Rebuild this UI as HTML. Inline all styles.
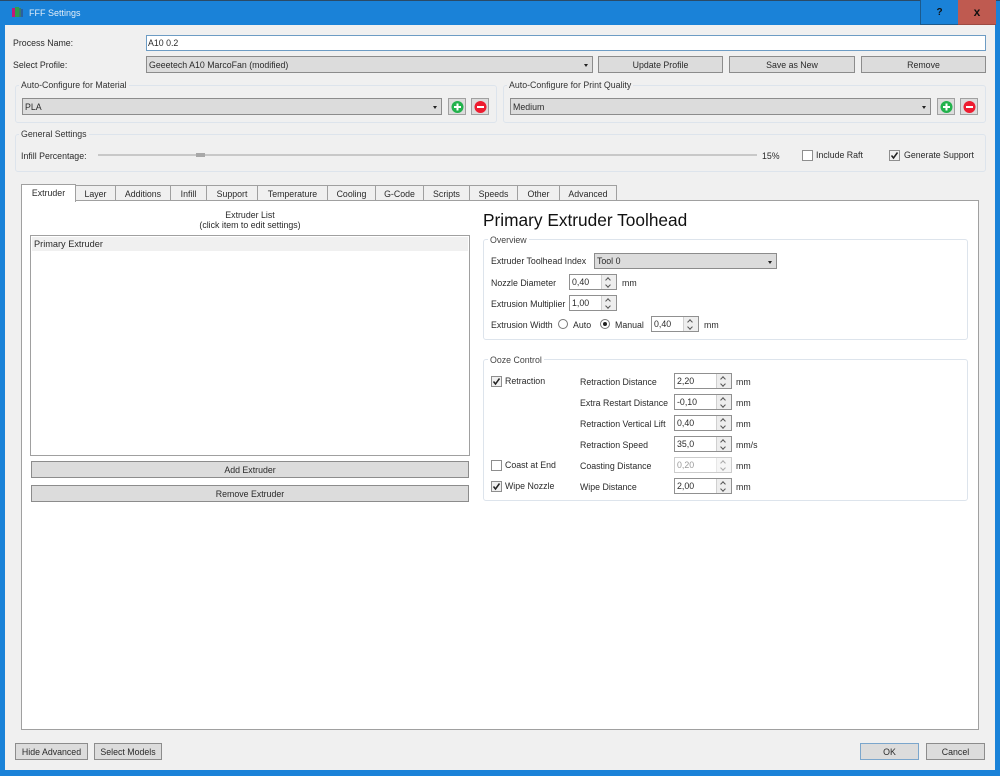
<!DOCTYPE html>
<html><head><meta charset="utf-8"><title>FFF Settings</title>
<style>
html,body{margin:0;padding:0;width:1000px;height:776px;overflow:hidden;background:#1a82d8}
body{position:relative;font-family:"Liberation Sans",sans-serif;font-size:8.800px;color:#2a2a2a;filter:blur(.35px)}
div,span{position:absolute;box-sizing:border-box}
.t{white-space:nowrap;height:14px;line-height:15px}
.b{background:#dcdcdc;border:1px solid #8c8c8c;text-align:center;line-height:16px;white-space:nowrap;color:#2a2a2a}
.c{background:#dcdcdc;border:1px solid #8c8c8c;line-height:16px;padding-left:2px;white-space:nowrap}
.c i{position:absolute;right:4px;top:7px;width:0;height:0;border:2px solid transparent;border-top:3px solid #222;border-bottom:0}
.g{border:1px solid #dde4ec;border-radius:3px}
.gt{background:#f0f0f0;padding:0 2px;height:12px;line-height:12px;white-space:nowrap;color:#333}
.gw{background:#fff;padding:0 2px;height:12px;line-height:12px;white-space:nowrap;color:#444}
.tab{top:185px;height:16px;background:#f0f0f0;border:1px solid #a0a0a0;border-left:0;text-align:center;line-height:16px;white-space:nowrap}
.ib{background:#dcdcdc;border:1px solid #a0a0a0;width:18px;height:17px;top:98px}
.ib svg{position:absolute;left:1px;top:1px}
.s{background:#fff;border:1px solid #909090;height:16px;line-height:15px;padding-left:2px;white-space:nowrap}
.s b{position:absolute;right:0;top:0;bottom:0;width:14px;background:#eeeeee;border-left:1px solid #d0d0d0;font-weight:normal}
.s b:before,.s b:after{content:"";position:absolute;left:4px;width:3px;height:3px;border-left:1px solid #555;border-top:1px solid #555}
.s b:before{top:3px;transform:rotate(45deg)}
.s b:after{top:8px;transform:rotate(225deg)}
.s u{position:absolute;right:0;top:6px;width:13px;height:1px;background:#fff}
.ck{width:11px;height:11px;background:#fff;border:1px solid #8e8e8e}
.ck svg{position:absolute;left:0;top:0}
.r{width:10px;height:10px;border-radius:50%;background:#fff;border:1px solid #777}
</style></head>
<body>
<div style="left:0;top:0;width:1000px;height:1px;background:#2b4a66"></div>
<div style="left:5px;top:25px;width:990px;height:745px;background:#f0f0f0"></div>

<svg style="position:absolute;left:12px;top:7px" width="12" height="11"><rect x="0" y="1" width="3" height="9" fill="#c2187a"/><rect x="3" y="0" width="4" height="10" fill="#2e9e4c"/><rect x="7" y="1" width="2" height="9" fill="#3a7a70"/><rect x="9" y="2" width="2" height="8" fill="#2a5fa0"/></svg>
<div class="t" style="left:29px;top:6px;color:#e3eef8;font-size:9px">FFF Settings</div>
<div style="left:920px;top:0;width:39px;height:25px;background:#1a82d8;border:1px solid #1c5a8c;border-top:0;text-align:center;line-height:26px;font-weight:bold;font-size:10px;color:#111">?</div>
<div style="left:958px;top:0;width:38px;height:25px;background:#bf5a50;border-bottom:1px solid #9c4a42;text-align:center;line-height:25px;font-weight:bold;font-size:12px;color:#111">x</div>

<div class="t" style="left:13px;top:36px">Process Name:</div>
<div style="left:146px;top:35px;width:840px;height:16px;background:#fff;border:1px solid #6d9cc4;line-height:15px;padding-left:1px;white-space:nowrap">A10 0.2</div>
<div class="t" style="left:13px;top:58px">Select Profile:</div>
<div class="c" style="left:146px;top:56px;width:447px;height:17px">Geeetech A10 MarcoFan (modified)<i></i></div>
<div class="b" style="left:598px;top:56px;width:125px;height:17px">Update Profile</div>
<div class="b" style="left:729px;top:56px;width:126px;height:17px">Save as New</div>
<div class="b" style="left:861px;top:56px;width:125px;height:17px">Remove</div>

<div class="g" style="left:15px;top:85px;width:482px;height:38px"></div>
<div class="gt" style="left:19px;top:79px">Auto-Configure for Material</div>
<div class="c" style="left:22px;top:98px;width:420px;height:17px">PLA<i></i></div>
<div class="ib" style="left:448px"><svg width="16" height="15"><circle cx="7.500" cy="7" r="6" fill="#22b24c"/><rect x="4" y="6" width="7" height="2" fill="#fff"/><rect x="6.500" y="3.500" width="2" height="7" fill="#fff"/></svg></div>
<div class="ib" style="left:471px"><svg width="16" height="15"><circle cx="7.500" cy="7" r="6" fill="#ee1c30"/><rect x="4" y="6" width="7" height="2" fill="#fff"/></svg></div>

<div class="g" style="left:503px;top:85px;width:483px;height:38px"></div>
<div class="gt" style="left:507px;top:79px">Auto-Configure for Print Quality</div>
<div class="c" style="left:510px;top:98px;width:421px;height:17px">Medium<i></i></div>
<div class="ib" style="left:937px"><svg width="16" height="15"><circle cx="7.500" cy="7" r="6" fill="#22b24c"/><rect x="4" y="6" width="7" height="2" fill="#fff"/><rect x="6.500" y="3.500" width="2" height="7" fill="#fff"/></svg></div>
<div class="ib" style="left:960px"><svg width="16" height="15"><circle cx="7.500" cy="7" r="6" fill="#ee1c30"/><rect x="4" y="6" width="7" height="2" fill="#fff"/></svg></div>

<div class="g" style="left:15px;top:134px;width:971px;height:38px"></div>
<div class="gt" style="left:19px;top:128px">General Settings</div>
<div class="t" style="left:21px;top:149px">Infill Percentage:</div>
<div style="left:98px;top:154px;width:659px;height:2px;background:#c8c8c8"></div>
<div style="left:196px;top:153px;width:9px;height:4px;background:#a8a8a8"></div>
<div class="t" style="left:762px;top:149px">15%</div>
<div class="ck" style="left:802px;top:150px"></div>
<div class="t" style="left:816px;top:148px">Include Raft</div>
<div class="ck" style="left:889px;top:150px;background:#f0f0f0"><svg width="9" height="9"><path d="M1.500 4.500L3.500 7L7.500 1.500" fill="none" stroke="#222" stroke-width="1.500"/></svg></div>
<div class="t" style="left:904px;top:148px">Generate Support</div>

<div class="tab" style="left:76px;width:40px">Layer</div>
<div class="tab" style="left:116px;width:55px">Additions</div>
<div class="tab" style="left:171px;width:36px">Infill</div>
<div class="tab" style="left:207px;width:51px">Support</div>
<div class="tab" style="left:258px;width:70px">Temperature</div>
<div class="tab" style="left:328px;width:48px">Cooling</div>
<div class="tab" style="left:376px;width:48px">G-Code</div>
<div class="tab" style="left:424px;width:46px">Scripts</div>
<div class="tab" style="left:470px;width:48px">Speeds</div>
<div class="tab" style="left:518px;width:42px">Other</div>
<div class="tab" style="left:560px;width:57px">Advanced</div>
<div style="left:21px;top:200px;width:958px;height:530px;background:#fff;border:1px solid #a0a0a0"></div>
<div style="left:21px;top:184px;width:55px;height:18px;background:#fff;border:1px solid #a0a0a0;border-bottom:0;text-align:center;line-height:16px">Extruder</div>

<div class="t" style="left:30px;width:440px;top:208px;text-align:center">Extruder List</div>
<div class="t" style="left:30px;width:440px;top:218px;text-align:center">(click item to edit settings)</div>
<div style="left:30px;top:235px;width:440px;height:221px;background:#fff;border:1px solid #a0a0a0"></div>
<div style="left:32px;top:237px;width:436px;height:14px;background:#f0f0f0;line-height:15px;padding-left:2px;font-size:9.200px">Primary Extruder</div>
<div class="b" style="left:31px;top:461px;width:438px;height:17px">Add Extruder</div>
<div class="b" style="left:31px;top:485px;width:438px;height:17px">Remove Extruder</div>

<div class="t" style="left:483px;top:210px;height:21px;line-height:21px;font-size:17.300px;color:#111">Primary Extruder Toolhead</div>

<div class="g" style="left:483px;top:239px;width:485px;height:101px"></div>
<div class="gw" style="left:488px;top:234px">Overview</div>
<div class="t" style="left:491px;top:254px">Extruder Toolhead Index</div>
<div class="c" style="left:594px;top:253px;width:183px;height:16px;line-height:15px">Tool 0<i></i></div>
<div class="t" style="left:491px;top:276px">Nozzle Diameter</div>
<div class="s" style="left:569px;top:274px;width:48px">0,40<b></b></div>
<div class="t" style="left:622px;top:276px">mm</div>
<div class="t" style="left:491px;top:297px">Extrusion Multiplier</div>
<div class="s" style="left:569px;top:295px;width:48px">1,00<b></b></div>
<div class="t" style="left:491px;top:318px">Extrusion Width</div>
<div class="r" style="left:558px;top:319px"></div>
<div class="t" style="left:573px;top:318px">Auto</div>
<div class="r" style="left:600px;top:319px"><span style="left:2px;top:2px;width:4px;height:4px;border-radius:50%;background:#222"></span></div>
<div class="t" style="left:615px;top:318px">Manual</div>
<div class="s" style="left:651px;top:316px;width:48px">0,40<b></b></div>
<div class="t" style="left:704px;top:318px">mm</div>

<div class="g" style="left:483px;top:359px;width:485px;height:142px"></div>
<div class="gw" style="left:488px;top:354px">Ooze Control</div>
<div class="ck" style="left:491px;top:376px;background:#f0f0f0"><svg width="9" height="9"><path d="M1.500 4.500L3.500 7L7.500 1.500" fill="none" stroke="#222" stroke-width="1.500"/></svg></div>
<div class="t" style="left:505px;top:374px">Retraction</div>
<div class="ck" style="left:491px;top:460px"></div>
<div class="t" style="left:505px;top:458px">Coast at End</div>
<div class="ck" style="left:491px;top:481px;background:#f0f0f0"><svg width="9" height="9"><path d="M1.500 4.500L3.500 7L7.500 1.500" fill="none" stroke="#222" stroke-width="1.500"/></svg></div>
<div class="t" style="left:505px;top:479px">Wipe Nozzle</div>

<div class="t" style="left:580px;top:375px">Retraction Distance</div>
<div class="s" style="left:674px;top:373px;width:58px">2,20<b></b></div>
<div class="t" style="left:736px;top:375px">mm</div>
<div class="t" style="left:580px;top:396px">Extra Restart Distance</div>
<div class="s" style="left:674px;top:394px;width:58px">-0,10<b></b></div>
<div class="t" style="left:736px;top:396px">mm</div>
<div class="t" style="left:580px;top:417px">Retraction Vertical Lift</div>
<div class="s" style="left:674px;top:415px;width:58px">0,40<b></b></div>
<div class="t" style="left:736px;top:417px">mm</div>
<div class="t" style="left:580px;top:438px">Retraction Speed</div>
<div class="s" style="left:674px;top:436px;width:58px">35,0<b></b></div>
<div class="t" style="left:736px;top:438px">mm/s</div>
<div class="t" style="left:580px;top:459px">Coasting Distance</div>
<div class="s" style="left:674px;top:457px;width:58px;border-color:#ccc;color:#999">0,20<b style="opacity:.5"></b></div>
<div class="t" style="left:736px;top:459px">mm</div>
<div class="t" style="left:580px;top:480px">Wipe Distance</div>
<div class="s" style="left:674px;top:478px;width:58px">2,00<b></b></div>
<div class="t" style="left:736px;top:480px">mm</div>

<div class="b" style="left:15px;top:743px;width:73px;height:17px">Hide Advanced</div>
<div class="b" style="left:94px;top:743px;width:68px;height:17px">Select Models</div>
<div class="b" style="left:860px;top:743px;width:59px;height:17px;border-color:#7ba6cc">OK</div>
<div class="b" style="left:926px;top:743px;width:59px;height:17px">Cancel</div>
</body></html>
